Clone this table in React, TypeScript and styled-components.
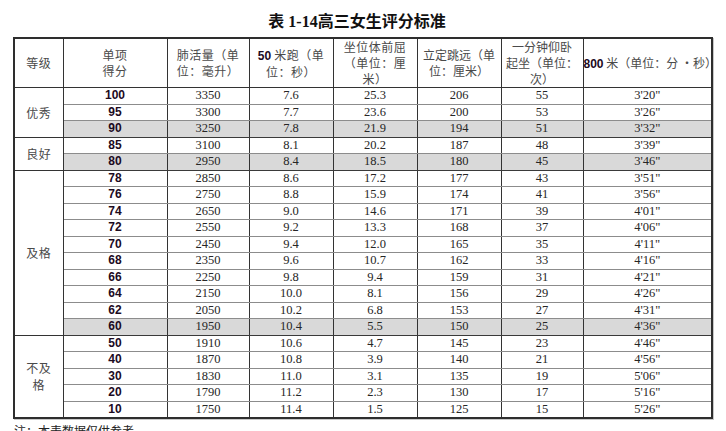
import React from 'react'
import { styled, createGlobalStyle } from 'styled-components'

const GlobalStyle = createGlobalStyle`
    body {
        margin: 0;
        background: #ffffff;
    }
`;

const Page = styled.div`
    width: 726px;
    height: 431px;
    overflow: hidden;
    background: #ffffff;
`;

const Title = styled.h1`
    margin: 0;
    height: 37px;
    padding-right: 12px;
    box-sizing: border-box;
    text-align: center;
    font-family: "Liberation Serif", "Noto Sans CJK SC", serif;
    font-size: 16px;
    font-weight: bold;
    line-height: 40px;
    color: #111;
`;

const TitleCjk = styled.span`
    font-family: "Noto Sans CJK SC", sans-serif;
    font-weight: bold;
`;

const Table = styled.table`
    margin-left: 13px;
    width: 698px;
    table-layout: fixed;
    border-collapse: collapse;
    border: 2px solid #2e2e2e;
    box-shadow: 1px 1px 0 #c8c8c8;
`;

const HeadCell = styled.th<{ $spaced?: boolean }>`
    height: 48px;
    padding: 0;
    border: 1px solid #333;
    text-align: center;
    vertical-align: middle;
    white-space: nowrap;
    font-family: "Noto Sans CJK SC", sans-serif;
    font-size: 12px;
    font-weight: normal;
    line-height: 16px;
    letter-spacing: ${(p) => (p.$spaced ? '0.5px' : '0')};
    color: #4a4a4a;
`;

const BoldNum = styled.span`
    font-family: "Liberation Sans", Arial, sans-serif;
    font-weight: bold;
    font-size: 12px;
    letter-spacing: 0;
    color: #1c0a1e;
`;

const Row = styled.tr<{ $shade: boolean; $groupEnd: boolean }>`
    height: 16.5px;
    background: ${(p) => (p.$shade ? '#d9d9d9' : '#ffffff')};

    & > td {
        border-bottom: 1px solid ${(p) => (p.$groupEnd ? '#3a3a3a' : '#8c8c8c')};
    }
`;

const GradeCell = styled.td`
    padding: 0;
    border: 1px solid #333 !important;
    background: #ffffff;
    text-align: center;
    vertical-align: middle;
    font-family: "Noto Sans CJK SC", sans-serif;
    font-size: 12px;
    line-height: 17px;
    letter-spacing: 0.5px;
    color: #4a4a4a;
`;

const ScoreCell = styled.td`
    padding: 0;
    border-left: 1px solid #333;
    border-right: 1px solid #333;
    text-align: center;
    vertical-align: middle;
    font-family: "Liberation Sans", Arial, sans-serif;
    font-weight: bold;
    font-size: 12px;
    line-height: 15px;
    color: #1c0a1e;
`;

const ValueCell = styled.td`
    padding: 0;
    border-left: 1px solid #333;
    border-right: 1px solid #333;
    text-align: center;
    vertical-align: middle;
    font-family: "Liberation Serif", "Times New Roman", serif;
    font-size: 12.5px;
    line-height: 15px;
    color: #262626;
`;

const Note = styled.p`
    margin: 5px 0 0 14px;
    font-family: "Noto Sans CJK SC", sans-serif;
    font-size: 12px;
    line-height: 14px;
    color: #222;
`;

type Grade = { name: React.ReactNode; rows: string[][] };

const grades: Grade[] = [
    {
        name: '优秀',
        rows: [
            ['100', '3350', '7.6', '25.3', '206', '55', `3'20"`],
            ['95', '3300', '7.7', '23.6', '200', '53', `3'26"`],
            ['90', '3250', '7.8', '21.9', '194', '51', `3'32"`],
        ],
    },
    {
        name: '良好',
        rows: [
            ['85', '3100', '8.1', '20.2', '187', '48', `3'39"`],
            ['80', '2950', '8.4', '18.5', '180', '45', `3'46"`],
        ],
    },
    {
        name: '及格',
        rows: [
            ['78', '2850', '8.6', '17.2', '177', '43', `3'51"`],
            ['76', '2750', '8.8', '15.9', '174', '41', `3'56"`],
            ['74', '2650', '9.0', '14.6', '171', '39', `4'01"`],
            ['72', '2550', '9.2', '13.3', '168', '37', `4'06"`],
            ['70', '2450', '9.4', '12.0', '165', '35', `4'11"`],
            ['68', '2350', '9.6', '10.7', '162', '33', `4'16"`],
            ['66', '2250', '9.8', '9.4', '159', '31', `4'21"`],
            ['64', '2150', '10.0', '8.1', '156', '29', `4'26"`],
            ['62', '2050', '10.2', '6.8', '153', '27', `4'31"`],
            ['60', '1950', '10.4', '5.5', '150', '25', `4'36"`],
        ],
    },
    {
        name: (
            <>
                不及
                <br />
                格
            </>
        ),
        rows: [
            ['50', '1910', '10.6', '4.7', '145', '23', `4'46"`],
            ['40', '1870', '10.8', '3.9', '140', '21', `4'56"`],
            ['30', '1830', '11.0', '3.1', '135', '19', `5'06"`],
            ['20', '1790', '11.2', '2.3', '130', '17', `5'16"`],
            ['10', '1750', '11.4', '1.5', '125', '15', `5'26"`],
        ],
    },
];

const widths = [49, 104, 82, 84, 84, 84, 82, 129];

export default function App() {
    return (
        <Page>
            <GlobalStyle />
            <Title>
                <TitleCjk>表</TitleCjk> 1-14<TitleCjk>高三女生评分标准</TitleCjk>
            </Title>
            <Table>
                <colgroup>
                    {widths.map((w, i) => (
                        <col key={i} style={{ width: w }} />
                    ))}
                </colgroup>
                <thead>
                    <tr>
                        <HeadCell $spaced>等级</HeadCell>
                        <HeadCell $spaced>
                            单项
                            <br />
                            得分
                        </HeadCell>
                        <HeadCell $spaced>
                            肺活量（单
                            <br />
                            位：毫升）
                        </HeadCell>
                        <HeadCell $spaced>
                            <BoldNum>50</BoldNum> 米跑（单
                            <br />
                            位：秒）
                        </HeadCell>
                        <HeadCell $spaced>
                            坐位体前屈
                            <br />
                            （单位：厘
                            <br />
                            米）
                        </HeadCell>
                        <HeadCell>
                            立定跳远（单
                            <br />
                            位：厘米）
                        </HeadCell>
                        <HeadCell>
                            一分钟仰卧
                            <br />
                            起坐（单位：
                            <br />
                            次）
                        </HeadCell>
                        <HeadCell>
                            <BoldNum>800</BoldNum> 米（单位：分 ·秒）
                        </HeadCell>
                    </tr>
                </thead>
                <tbody>
                    {grades.map((g, gi) =>
                        g.rows.map((r, ri) => {
                            const last = ri === g.rows.length - 1;
                            return (
                                <Row
                                    key={`${gi}-${ri}`}
                                    $shade={last && gi < grades.length - 1}
                                    $groupEnd={last}
                                >
                                    {ri === 0 && <GradeCell rowSpan={g.rows.length}>{g.name}</GradeCell>}
                                    <ScoreCell>{r[0]}</ScoreCell>
                                    {r.slice(1).map((v, vi) => (
                                        <ValueCell key={vi}>{v}</ValueCell>
                                    ))}
                                </Row>
                            );
                        })
                    )}
                </tbody>
            </Table>
            <Note>注：本表数据仅供参考。</Note>
        </Page>
    )
}
